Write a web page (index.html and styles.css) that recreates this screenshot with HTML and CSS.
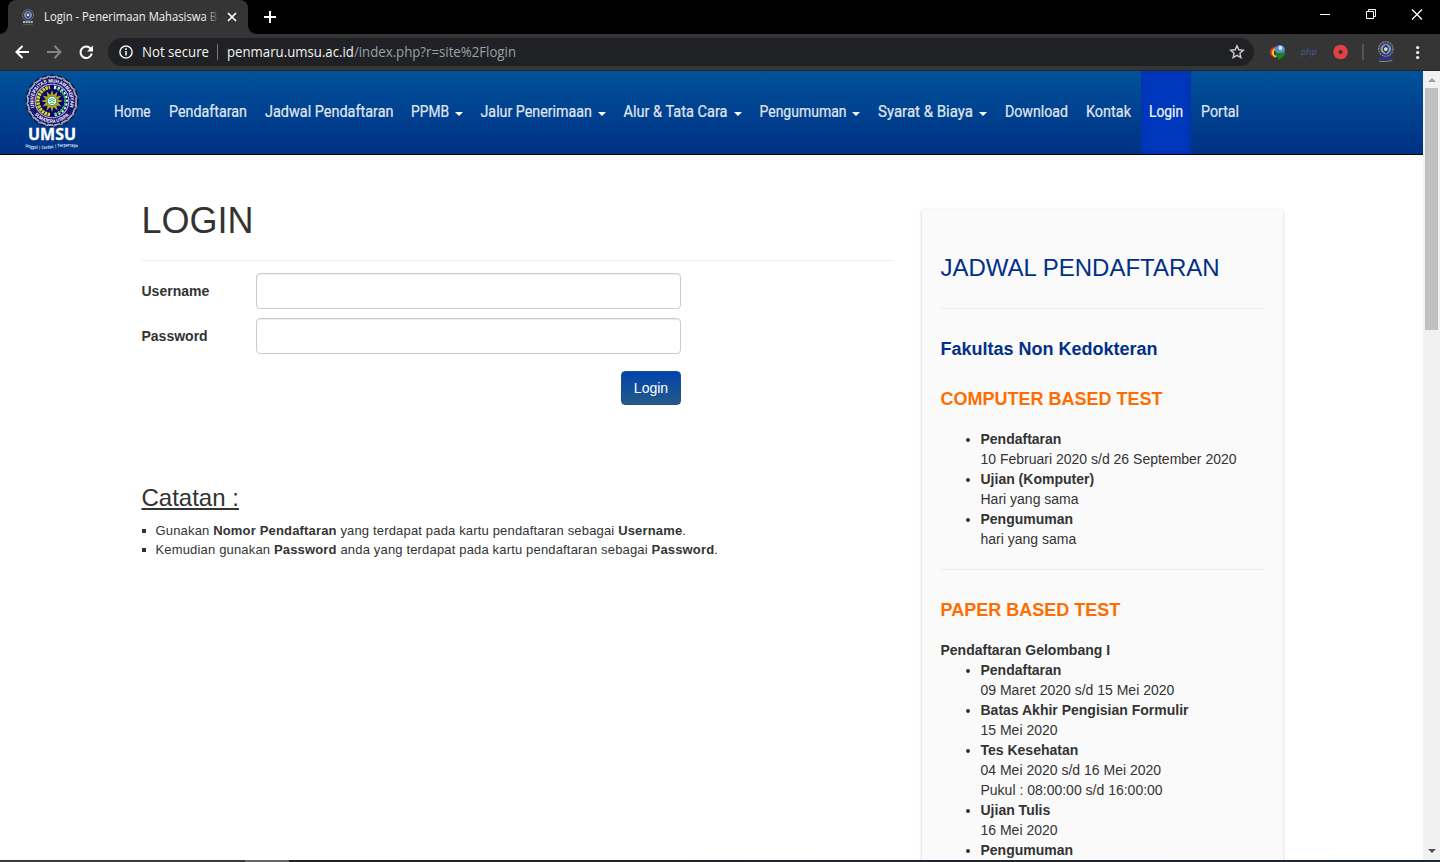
FILE: index.html
```html
<!DOCTYPE html>
<html lang="id">
<head>
<meta charset="utf-8">
<title>Login - Penerimaan Mahasiswa Baru</title>
<link rel="stylesheet" href="styles.css">
</head>
<body>
<svg width="0" height="0" class="defs">
  <defs>
    <linearGradient id="fade" gradientUnits="userSpaceOnUse" x1="160" x2="176" y1="0" y2="0"><stop offset="0" stop-color="#f1f1f1"/><stop offset="1" stop-color="#f1f1f1" stop-opacity="0"/></linearGradient>
    <symbol id="emblem" viewBox="0 0 54 54">
      <circle cx="27" cy="27" r="25" fill="#191970" stroke="#b9b084" stroke-width="1.2"/>
      <circle cx="27" cy="27" r="25.800" fill="none" stroke="#161d3c" stroke-width="1.6" stroke-dasharray="5 2.9"/>
      <circle cx="27" cy="27" r="24" fill="none" stroke="#aaa6d8" stroke-width="1.4" stroke-dasharray="6 1.3"/>
      <circle cx="27" cy="27" r="16.8" fill="#08086b" stroke="#b5b2d8" stroke-width="1.1"/>
      <path d="M25 40.700A13.800 13.800 0 0 1 25 13.300" fill="none" stroke="#d8d321" stroke-width="3.600" stroke-dasharray="2.400 .8"/>
      <path d="M29 13.3A13.8 13.8 0 0 1 29 40.7" fill="none" stroke="#e9f5e9" stroke-width="3.4" stroke-dasharray="2.200 1.500"/>
      <path d="M31 14A13.8 13.8 0 0 1 29 40.7" fill="none" stroke="#18a34a" stroke-width="1.3"/>
      <path d="M27 16l1.6 5.1 3.9-3.6-1.1 5.2 5.1-1.2-3.6 3.9L38 27l-5.1 1.6 3.6 3.9-5.1-1.1 1.1 5.1-3.9-3.6L27 38l-1.6-5.1-3.9 3.6 1.1-5.1-5.1 1.1 3.6-3.9L16 27l5.1-1.6-3.6-3.9 5.1 1.2-1.1-5.2 3.9 3.6z" fill="#b5aa26"/>
      <circle cx="27" cy="27" r="4.7" fill="#f4fff5" stroke="#07642e" stroke-width=".7"/>
      <path d="M24 26q3-3 6 0m-6 2q3-3 6 0m-5 2q2-2 4 0" stroke="#2da85b" fill="none"/>
    </symbol>
    <symbol id="mini" viewBox="0 0 16 16">
      <circle cx="8" cy="8" r="7.200" fill="#252a68" stroke="#8d8d96" stroke-width="1.300" stroke-dasharray="2 .7"/>
      <circle cx="8" cy="8" r="4.900" fill="#1c2a8c" stroke="#a5a7bb" stroke-width="1"/>
      <path d="M7 11.500A3.600 3.600 0 0 1 7 4.500" fill="none" stroke="#b5b34a" stroke-width="1.200"/>
      <path d="M9 4.500A3.600 3.600 0 0 1 9 11.500" fill="none" stroke="#79b7a0" stroke-width="1.200"/>
      <circle cx="8" cy="8" r="1.900" fill="#dfe4cf"/>
    </symbol>
  </defs>
</svg>
<div class="tabs">
  <div class="tab">
    <svg class="favicon" width="12" height="16" viewBox="0 0 12 16"><use href="#mini" width="12" height="12"/><path d="M1 13h10" stroke="#ddd" stroke-width="1.6" stroke-dasharray="2 .6"/><path d="M1 15.3h10" stroke="#777" stroke-width=".6"/></svg>
    <svg class="tabtitle" width="176" height="20"><text x="0" y="14" textLength="173" lengthAdjust="spacingAndGlyphs" fill="url(#fade)">Login - Penerimaan Mahasiswa B</text></svg>
    <svg class="tabclose" width="10" height="10"><path d="M1 1l8 8M9 1l-8 8" stroke="#fff" stroke-width="1.7"/></svg>
  </div>
  <svg class="plus" width="12" height="12"><path d="M6 0v12M0 6h12" stroke="#fff" stroke-width="2"/></svg>
  <svg class="winctl" width="98" height="12"><path d="M0 6.5h10" stroke="#fff"/><path d="M46.5 3.5h7v7h-7zM48.5 3v-1.500h7v7h-2" fill="none" stroke="#fff"/><path d="M92 1.500l10 10M102 1.500l-10 10" stroke="#fff" stroke-width="1.3"/></svg>
</div>
<div class="toolbar">
  <svg class="navicons" width="80" height="16" fill="none" stroke="#fff" stroke-width="2"><path d="M14 8H1.500M7.500 2L1.500 8l6 6"/><path d="M32 8h13M39.500 2l6 6-6 6" stroke="#858585"/><path d="M75.500 4.500A5.700 5.700 0 1 0 76.800 9.500"/><path d="M78 1.500v6h-6z" fill="#fff" stroke="none"/></svg>
  <div class="omnibox">
    <svg class="info" width="14" height="14"><circle cx="7" cy="7" r="6.100" fill="none" stroke="#eee" stroke-width="1.500"/><path d="M7 6v4.500M7 3.300v1.600" stroke="#eee" stroke-width="1.600"/></svg>
    <svg class="secure" width="67" height="20"><text x="0" y="15" textLength="67" lengthAdjust="spacingAndGlyphs">Not secure</text></svg>
    <i class="sep"></i>
    <svg class="url" width="300" height="20"><text x="0" y="15" textLength="289" lengthAdjust="spacingAndGlyphs">penmaru.umsu.ac.id<tspan class="path">/index.php?r=site%2Flogin</tspan></text></svg>
    <svg class="star" width="16" height="16" viewBox="0 0 16 16"><path d="M8 1.700l1.800 4.100 4.500.4-3.400 3 1 4.400L8 11.300l-3.900 2.300 1-4.400-3.400-3 4.500-.4z" fill="none" stroke="#ccc" stroke-width="1.400"/></svg>
  </div>
  <svg class="ext" width="172" height="28" viewBox="0 0 172 28">
    <path d="M9 8.500C3 8 .5 12 1 15q.5 3 5 5l2-4z" fill="#d83a2e"/><path d="M9 10C4.500 10 2.500 13 3 16q1 2.500 4 3.500l3-4z" fill="#ffd61c"/><path d="M6 12q-2 2-.5 5l3 1V11z" fill="#222"/><circle cx="11" cy="12" r="5" fill="#548fd2"/><circle cx="11.500" cy="10" r="2" fill="#d9ecff"/><path d="M6 14.500l6 .5 5-1-2 4-5 4-1-2.500q-3-1-3-5z" fill="#15851c"/>
    <text x="32" y="17" textLength="16" lengthAdjust="spacingAndGlyphs" class="php">php</text>
    <circle cx="72" cy="14" r="7.300" fill="#e04343"/><circle cx="72" cy="14" r="2" fill="#4b2626"/>
    <path d="M94.500 6v16" stroke="#777"/>
    <use href="#mini" x="109.500" y="3" width="16" height="16"/><path d="M110.500 20.500h14" stroke="#2930a5" stroke-width="3" stroke-dasharray="2.800 .5"/><path d="M111 23.500h8l5-1" fill="none" stroke="#888"/>
    <g fill="#fff"><circle cx="149.500" cy="9.500" r="1.600"/><circle cx="149.500" cy="14.500" r="1.600"/><circle cx="149.500" cy="19.500" r="1.600"/></g>
  </svg>
</div>
<div class="viewport">
<div class="page">
  <header class="nav">
    <svg class="logo" width="60" height="83" viewBox="0 0 60 83">
      <use href="#emblem" x="3" y="3" width="54" height="54"/>
      <path id="ringTop" d="M12.600 36.300A18.500 18.500 0 1 1 47.400 36.300" fill="none"/><path id="ringBottom" d="M12.700 43.500A22 22 0 0 0 47.300 43.500" fill="none"/>
      <text class="ring"><textPath href="#ringTop" textLength="70" lengthAdjust="spacingAndGlyphs">UNIVERSITAS MUHAMMADIYAH</textPath></text>
      <text class="ring"><textPath href="#ringBottom" textLength="39" lengthAdjust="spacingAndGlyphs">SUMATERA UTARA</textPath></text>
      <text class="umsu" x="6" y="68.500" textLength="48" lengthAdjust="spacingAndGlyphs">UMSU</text>
      <path id="motto" d="M3 76Q18 79.500 31 77T57 76.500" fill="none"/>
      <text class="motto"><textPath href="#motto" textLength="53" lengthAdjust="spacingAndGlyphs">Unggul | Cerdas | Terpercaya</textPath></text>
    </svg>
    <nav class="menu">
      <a><svg width="37" height="24"><text y="17" textLength="36.500" lengthAdjust="spacingAndGlyphs">Home</text></svg></a>
      <a><svg width="78" height="24"><text y="17" textLength="78" lengthAdjust="spacingAndGlyphs">Pendaftaran</text></svg></a>
      <a><svg width="128" height="24"><text y="17" textLength="128.500" lengthAdjust="spacingAndGlyphs">Jadwal Pendaftaran</text></svg></a>
      <a><svg width="38" height="24"><text y="17" textLength="38" lengthAdjust="spacingAndGlyphs">PPMB</text></svg><i class="caret"></i></a>
      <a><svg width="111" height="24"><text y="17" x="-.5" textLength="111.500" lengthAdjust="spacingAndGlyphs">Jalur Penerimaan</text></svg><i class="caret"></i></a>
      <a><svg width="104" height="24"><text y="17" x="-.5" textLength="104" lengthAdjust="spacingAndGlyphs">Alur &amp; Tata Cara</text></svg><i class="caret"></i></a>
      <a><svg width="86" height="24"><text y="17" x="-.5" textLength="87" lengthAdjust="spacingAndGlyphs">Pengumuman</text></svg><i class="caret"></i></a>
      <a><svg width="95" height="24"><text y="17" textLength="95" lengthAdjust="spacingAndGlyphs">Syarat &amp; Biaya</text></svg><i class="caret"></i></a>
      <a><svg width="63" height="24"><text y="17" textLength="63" lengthAdjust="spacingAndGlyphs">Download</text></svg></a>
      <a><svg width="45" height="24"><text y="17" textLength="45" lengthAdjust="spacingAndGlyphs">Kontak</text></svg></a>
      <a class="active"><svg width="34" height="24"><text y="17" textLength="34" lengthAdjust="spacingAndGlyphs">Login</text></svg></a>
      <a><svg width="39" height="24"><text y="17" textLength="38" lengthAdjust="spacingAndGlyphs">Portal</text></svg></a>
    </nav>
  </header>
  <div class="content">
    <main class="main">
      <h1>LOGIN</h1>
      <form class="form">
        <label for="u">Username</label><input id="u" type="text">
        <label for="p">Password</label><input id="p" type="password">
        <button type="button">Login</button>
      </form>
      <h3 class="note">Catatan :</h3>
      <ul class="notes">
        <li>Gunakan <b>Nomor Pendaftaran</b> yang terdapat pada kartu pendaftaran sebagai <b>Username</b>.</li>
        <li>Kemudian gunakan <b>Password</b> anda yang terdapat pada kartu pendaftaran sebagai <b>Password</b>.</li>
      </ul>
    </main>
    <aside class="side">
      <h3>JADWAL PENDAFTARAN</h3>
      <h4 class="faculty">Fakultas Non Kedokteran</h4>
      <h4 class="test">COMPUTER BASED TEST</h4>
      <ul class="first">
        <li><b>Pendaftaran</b><br>10 Februari 2020 s/d 26 September 2020</li>
        <li><b>Ujian (Komputer)</b><br>Hari yang sama</li>
        <li><b>Pengumuman</b><br>hari yang sama</li>
      </ul>
      <h4 class="test paper">PAPER BASED TEST</h4>
      <b>Pendaftaran Gelombang I</b>
      <ul>
        <li><b>Pendaftaran</b><br>09 Maret 2020 s/d 15 Mei 2020</li>
        <li><b>Batas Akhir Pengisian Formulir</b><br>15 Mei 2020</li>
        <li><b>Tes Kesehatan</b><br>04 Mei 2020 s/d 16 Mei 2020<br>Pukul : 08:00:00 s/d 16:00:00</li>
        <li><b>Ujian Tulis</b><br>16 Mei 2020</li>
        <li><b>Pengumuman</b></li>
      </ul>
    </aside>
  </div>
</div>
<div class="scroll"><i class="up"></i><i class="thumb"></i><i class="down"></i></div>
</div>
<div class="taskbar"><i></i></div>
</body>
</html>
```
FILE: styles.css
```css
* { box-sizing: border-box; }
body { margin: 0; width: 1440px; height: 862px; overflow: hidden; background: #fff; color: #333; font: 14px/20px "Liberation Sans", Arial, sans-serif; }
svg { display: block; flex: none; overflow: visible; }
.defs { position: absolute; }
.tabs { height: 34px; background: #000; display: flex; align-items: center; padding-left: 8px; }
.tab { position: relative; width: 240px; height: 34px; background: #353535; border-radius: 8px 8px 0 0; display: flex; align-items: center; padding-left: 14px; }
.tab::before, .tab::after { content: ""; position: absolute; bottom: 0; width: 8px; height: 8px; }
.tab::before { left: -8px; background: radial-gradient(circle at 0 0, #000 7.500px, #353535 8px); }
.tab::after { right: -8px; background: radial-gradient(circle at 100% 0, #000 7.500px, #353535 8px); }
.tabtitle { margin-left: 10px; font: 12px "Open Sans", sans-serif; }
.tabclose { margin-left: 7px; }
.plus { margin-left: 16px; }
.winctl { margin-left: 1044px; margin-top: -6px; }
.toolbar { height: 37px; background: #353535; border-bottom: 1px solid #262626; display: flex; align-items: center; }
.navicons { margin-left: 15px; }
.omnibox { width: 1147px; height: 28px; margin-left: 13px; border-radius: 14px; background: #202124; display: flex; align-items: center; padding-left: 11px; font: 14px "Open Sans", sans-serif; }
.omnibox text { fill: #f4f4f4; }
.secure { margin-left: 9px; }
.sep { width: 1px; height: 16px; background: #777; margin: 0 9px 0 8px; }
.omnibox .path { fill: #9aa0a6; }
.star { margin-left: 702px; }
.ext { margin-left: 14px; padding-left: 1px; }
.php { font: italic 9px "Open Sans", sans-serif; fill: #4b5997; }
.viewport { display: flex; height: 789px; }
.page { width: 1423px; height: 789px; overflow: hidden; }
.nav { height: 84px; background: linear-gradient(#00529b, #003184); border-bottom: 1px solid #000; display: flex; }
.logo { margin-left: 22px; }
.ring { font: bold 5px "Liberation Sans", sans-serif; fill: #fff; }
.umsu { font: bold 16px "Open Sans", sans-serif; fill: #fff; stroke: #fff; stroke-width: .3px; }
.motto { font: bold 4.500px "Open Sans", sans-serif; fill: #dce8f6; }
.menu { display: flex; margin-left: 23px; font: 17px Roboto, sans-serif; }
.menu a { display: flex; align-items: center; padding: 0 9px 2px; height: 83px; }
.menu text { fill: #e0e7f1; stroke: #e0e7f1; stroke-width: .2px; }
.menu .active { background: #0038bd; box-shadow: inset 0 0 8px #0030a4; padding: 0 8px 2px; margin: 0 1px; }
.menu .active text { fill: #fff; }
.caret { width: 8px; height: 4px; margin: 5px 0 0 6px; border: 4px solid transparent; border-top-color: #fff; border-bottom: 0; }
.content { display: flex; align-items: flex-start; padding-left: 141.500px; }
.main { width: 750.500px; }
h1, h3, h4 { margin: 0; }
h1 { font-size: 36px; line-height: 40px; font-weight: 400; padding: 46px 0 19px; border-bottom: 1px solid #eee; }
.form { width: 539.500px; display: grid; grid-template-columns: 114.500px 425px; row-gap: 9px; padding-top: 12px; align-items: center; }
.form label { font-weight: bold; }
.form input { height: 36px; width: 425px; border: 1px solid #ccc; border-radius: 4px; box-shadow: inset 0 1px 1px rgba(0,0,0,.075); }
.form button { grid-column: 2; justify-self: end; margin-top: 8px; width: 60px; height: 34px; padding: 0; color: #fff; font: 14px "Liberation Sans", sans-serif; border: 1px solid #1e518a; border-radius: 4px; background: linear-gradient(#0044ad, #265a88); }
.note { margin-top: 79px; font-size: 24px; line-height: 28px; font-weight: 400; text-decoration: underline; }
.notes { list-style: none; margin: 9px 0 0; padding: 0; font-size: 13px; line-height: 19px; letter-spacing: .165px; }
.notes li { display: flow-root; padding-left: 14px; background: linear-gradient(#333, #333) 0 8px / 4px 4px no-repeat; white-space: nowrap; }
.side { width: 361px; height: 700px; margin: 54px 0 0 29.500px; padding: 43px 18.500px 0 19px; background: #fafafa; box-shadow: 0 1px 3px rgba(0,0,0,.25); border-radius: 3px; }
.side h3 { font-size: 24px; line-height: 32px; font-weight: 400; color: #003087; padding-bottom: 24px; border-bottom: 1px solid #eee; }
.side h4 { font-size: 18px; line-height: 20px; }
.faculty { color: #003087; padding-top: 30px; }
.side .test { color: #ff6d00; padding-top: 30px; padding-bottom: 20px; }
.side ul { margin: 0; padding-left: 40px; }
.side .first { padding-bottom: 20px; border-bottom: 1px solid #eee; }
.scroll { width: 17px; background: #f1f1f1; display: flex; flex-direction: column; align-items: center; }
.up { border: 4px solid transparent; border-top: 0; border-bottom-color: #a0a0a0; margin: 7px 0 6px; }
.thumb { width: 13px; height: 242px; background: #c1c1c1; }
.down { border: 4px solid transparent; border-bottom: 0; border-top-color: #505050; margin: auto 0 7px; }
.taskbar { height: 2px; background: linear-gradient(90deg, #3a3a3a 245px, #222 293px, #202632); display: flex; }
.taskbar i { margin-left: 245px; width: 44px; background: #666; }
```
